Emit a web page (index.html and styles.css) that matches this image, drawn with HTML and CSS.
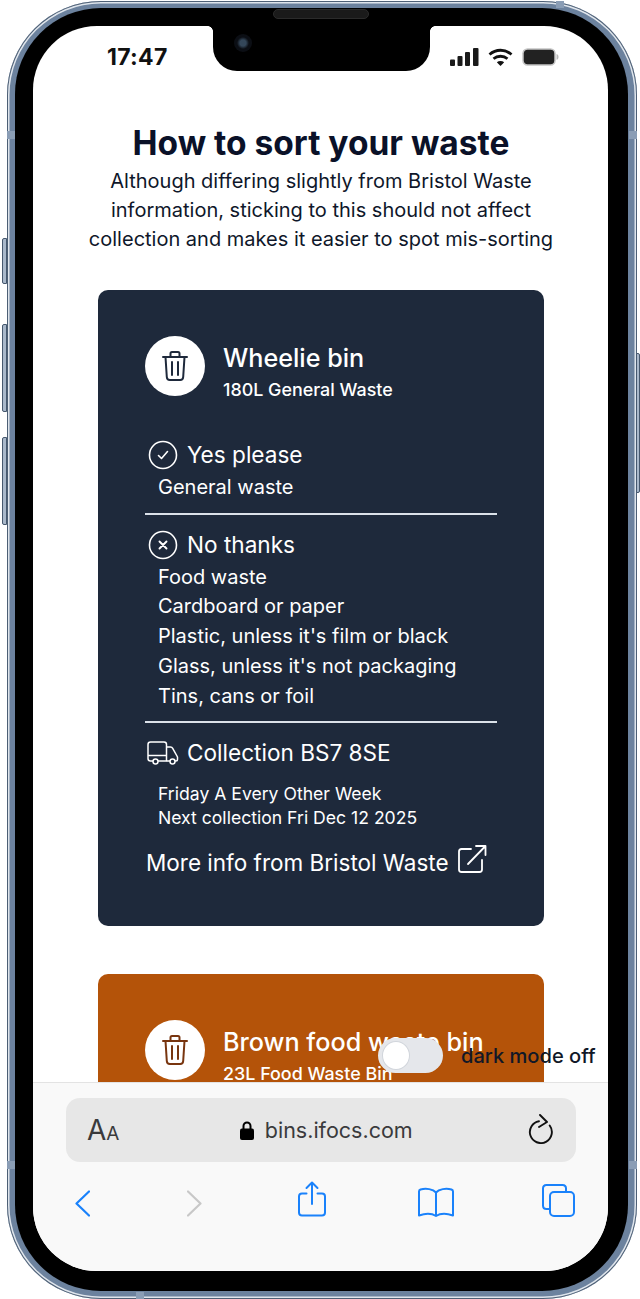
FILE: index.html

```html
<!DOCTYPE html>
<html lang="en">
<head>
  <meta charset="UTF-8">
  <title>How to sort your waste</title>
  <link rel="stylesheet" href="styles.css">
</head>
<body>
  <div class="phone">
    <span class="side-btn btn-mute"></span>
    <span class="side-btn btn-up"></span>
    <span class="side-btn btn-down"></span>
    <span class="side-btn btn-power"></span>
    <span class="band band-top"></span>
    <span class="band band-bottom"></span>
    <span class="band band-left-a"></span>
    <span class="band band-left-b"></span>
    <span class="band band-right-a"></span>
    <span class="band band-right-b"></span>
    <div class="bezel">
      <span class="speaker"></span>
      <div class="screen">
        <div class="notch">
          <span class="camera"></span>
        </div>

        <div class="status">
          <span class="time">17:47</span>
          <div class="status-icons">
            <svg width="29" height="18" viewBox="0 0 29 18" fill="#1a1a1a"><rect x="0" y="11.500" width="5" height="6.500" rx="1"/><rect x="7.500" y="8" width="5" height="10" rx="1"/><rect x="15" y="4" width="5" height="14" rx="1"/><rect x="23" y="0" width="5.500" height="18" rx="1"/></svg>
            <svg width="25" height="18" viewBox="0 0 25 18" fill="none" stroke="#111" stroke-width="2.800"><path d="M1.500 6.500C8 .8 17 .8 23.500 6.500"/><path d="M5.500 10.800c4-3.400 10-3.400 14 0"/><path d="M12.500 18l-3.700-3.700c2.100-1.700 5.300-1.700 7.400 0z" fill="#111" stroke="none"/></svg>
            <svg width="37" height="18" viewBox="0 0 37 18"><rect x="1" y="1" width="32" height="16" rx="4.500" fill="#222" stroke="#c4c4c4" stroke-width="1.500"/><path d="M34.500 6c1.500.4 2 1.600 2 2.900s-.5 2.500-2 2.900z" fill="#bbb"/></svg>
          </div>
        </div>

        <main class="page">
          <h1>How to sort your waste</h1>
          <p class="intro">Although differing slightly from Bristol Waste information, sticking to this should not affect collection and makes it easier to spot mis-sorting</p>

          <section class="card card-general">
            <div class="card-head">
              <div class="bin-icon">
                <svg width="28" height="32" viewBox="0 0 28 32" fill="none" stroke="currentColor" stroke-width="2" stroke-linejoin="round" stroke-linecap="round"><path d="M2 7h24"/><path d="M9.500 6.500V3.500q0-1.500 1.500-1.500h6q1.500 0 1.500 1.500v3"/><path d="M4.500 7l1.300 20q.2 3 3 3h10.400q2.800 0 3-3L23.500 7"/><path d="M11 12v13M17 12v13"/></svg>
              </div>
              <div class="card-title">
                <h2>Wheelie bin</h2>
                <p class="subtitle">180L General Waste</p>
              </div>
            </div>

            <div class="block block-first">
              <h3>
                <svg class="icon" width="30" height="30" viewBox="0 0 30 30" fill="none" stroke="#fff" stroke-width="1.600"><circle cx="15" cy="15" r="13.500"/><path d="M10.500 15.500l3 3 6-7" stroke-linecap="round" stroke-linejoin="round"/></svg>
                Yes please
              </h3>
              <ul>
                <li>General waste</li>
              </ul>
            </div>

            <div class="block">
              <h3>
                <svg class="icon" width="30" height="30" viewBox="0 0 30 30" fill="none" stroke="#fff" stroke-width="1.600"><circle cx="15" cy="15" r="13.500"/><path d="M11.500 11.500l7 7M18.500 11.500l-7 7" stroke-linecap="round" stroke-width="1.900"/></svg>
                No thanks
              </h3>
              <ul>
                <li>Food waste</li>
                <li>Cardboard or paper</li>
                <li>Plastic, unless it's film or black</li>
                <li>Glass, unless it's not packaging</li>
                <li>Tins, cans or foil</li>
              </ul>
            </div>

            <div class="block">
              <h3>
                <svg class="icon truck" width="32" height="24" viewBox="0 0 32 24" fill="none" stroke="#fff" stroke-width="1.500" stroke-linejoin="round"><path d="M6 20H3.500Q1 20 1 17.500V3.500Q1 1 3.500 1H17q2.500 0 2.500 2.500V20H11"/><path d="M1 14.500h18.500"/><path d="M19.500 6h4q1.500 0 2.200 1.300L30.500 16v2.500q0 1.500-1.500 1.500h-1"/><path d="M23 20h-3.500"/><circle cx="8.500" cy="20.500" r="2.500"/><circle cx="25.500" cy="20.500" r="2.500"/></svg>
                Collection BS7 8SE
              </h3>
              <ul class="dates">
                <li>Friday A Every Other Week</li>
                <li>Next collection Fri Dec 12 2025</li>
              </ul>
              <a class="more" href="#">
                More info from Bristol Waste
                <svg width="30" height="30" viewBox="0 0 30 30" fill="none" stroke="#fff" stroke-width="1.800" stroke-linecap="round" stroke-linejoin="round"><path d="M14 5H4.500Q2 5 2 7.500v18Q2 28 4.500 28h18q2.500 0 2.500-2.500V16"/><path d="M11 20L28.500 2M19 2h9.500v9"/></svg>
              </a>
            </div>
          </section>

          <section class="card card-food">
            <div class="card-head">
              <div class="bin-icon">
                <svg width="28" height="32" viewBox="0 0 28 32" fill="none" stroke="currentColor" stroke-width="2" stroke-linejoin="round" stroke-linecap="round"><path d="M2 7h24"/><path d="M9.500 6.500V3.500q0-1.500 1.500-1.500h6q1.500 0 1.500 1.500v3"/><path d="M4.500 7l1.300 20q.2 3 3 3h10.400q2.800 0 3-3L23.500 7"/><path d="M11 12v13M17 12v13"/></svg>
              </div>
              <div class="card-title">
                <h2>Brown food waste bin</h2>
                <p class="subtitle">23L Food Waste Bin</p>
              </div>
            </div>
          </section>
        </main>

        <div class="dark-toggle">
          <span class="switch"><span class="knob"></span></span>
          <span class="toggle-label">dark mode off</span>
        </div>

        <div class="toolbar">
          <div class="address">
            <span class="aa">A<small>A</small></span>
            <span class="url">
              <svg width="14" height="19" viewBox="0 0 14 19" fill="#000"><path d="M3.500 8V5a3.500 3.500 0 0 1 7 0v3" fill="none" stroke="#000" stroke-width="2"/><rect x="0" y="7.500" width="14" height="11.500" rx="2"/></svg>
              bins.ifocs.com
            </span>
            <svg class="reload" width="26" height="30" viewBox="0 0 26 30" fill="none" stroke="#111" stroke-width="1.900" stroke-linecap="round" stroke-linejoin="round"><path d="M11 7.200A11 11 0 1 0 21.700 11.500"/><path d="M12 1l7 7-8 5"/></svg>
          </div>
          <div class="nav">
            <svg class="nav-back" width="15" height="27" viewBox="0 0 15 27" fill="none" stroke="#1a82fb" stroke-width="2.200" stroke-linecap="round" stroke-linejoin="round"><path d="M14 1.500L1.500 13.500 14 25.500"/></svg>
            <svg class="nav-forward" width="15" height="27" viewBox="0 0 15 27" fill="none" stroke="#c8c8c8" stroke-width="2.200" stroke-linecap="round" stroke-linejoin="round"><path d="M1 1.500l12.500 12L1 25.500"/></svg>
            <svg class="nav-share" width="28" height="36" viewBox="0 0 28 36" fill="none" stroke="#1a82fb" stroke-width="2" stroke-linecap="round" stroke-linejoin="round"><path d="M8.500 12.500H4Q1 12.500 1 15.500v16Q1 34.500 4 34.500h20q3 0 3-3v-16q0-3-3-3h-4.500"/><path d="M14 23V1.500M8.500 7L14 1.500 19.500 7"/></svg>
            <svg class="nav-book" width="36" height="30" viewBox="0 0 36 30" fill="none" stroke="#1a82fb" stroke-width="2" stroke-linejoin="round"><path d="M18 5.500C15 2 8 1 2.500 2.500 1.500 2.800 1 3.500 1 4.500V28.500C7 26.500 14 26.500 18 29c4-2.500 11-2.500 17-.5V4.500c0-1-.5-1.700-1.500-2C28 1 21 2 18 5.500zM18 5.500V29"/></svg>
            <svg class="nav-tabs" width="33" height="33" viewBox="0 0 33 33" fill="none" stroke="#1a82fb" stroke-width="2"><path d="M8 25H4.500Q1 25 1 21.500v-17Q1 1 4.500 1h16Q24 1 24 4.500V8"/><rect x="8" y="8" width="24" height="24" rx="4"/></svg>
          </div>
        </div>
      </div>
    </div>
  </div>
</body>
</html>
```

FILE: styles.css

```css
* {
  box-sizing: border-box;
}

html, body {
  height: 100%;
}

body {
  margin: 0;
  background: #fff;
  font-family: Inter, "Liberation Sans", sans-serif;
  color: #0f172a;
}

/* device frame */
.phone {
  position: relative;
  width: 630px;
  height: 1298px;
  margin: 1px 0 0 7px;
  padding: 7px 9px 8px 8px;
  border-radius: 94px;
  background: #6c829e;
  box-shadow: inset 0 0 0 1px #4d5f75, inset 0 0 0 2.500px #dfe5ec;
}

.side-btn {
  position: absolute;
  width: 5px;
  border: 1px solid #46586e;
  background: #a9b8ca;
}

.btn-mute { left: -5px; top: 237px; height: 46px; border-radius: 2px 0 0 2px; }
.btn-up { left: -5px; top: 323px; height: 88px; border-radius: 2px 0 0 2px; }
.btn-down { left: -5px; top: 436px; height: 88px; border-radius: 2px 0 0 2px; }
.btn-power { right: -3px; top: 352px; height: 140px; width: 4px; border-radius: 0 2px 2px 0; }

.band {
  position: absolute;
  background: #8a9db5;
}

.band-top { left: 549px; top: 0; width: 8px; height: 7px; }
.band-bottom { left: 129px; bottom: 0; width: 8px; height: 7px; }
.band-left-a { left: 0; top: 130px; width: 8px; height: 8px; }
.band-left-b { left: 0; top: 1160px; width: 8px; height: 8px; }
.band-right-a { right: 0; top: 130px; width: 8px; height: 8px; }
.band-right-b { right: 0; top: 1160px; width: 8px; height: 8px; }

.bezel {
  height: 100%;
  padding: 18px 20px 20px 18px;
  border-radius: 86px;
  background: #000;
}

.speaker {
  position: absolute;
  left: 266px;
  top: 8px;
  width: 96px;
  height: 10px;
  border: 1px solid #2b2b2b;
  border-radius: 5px;
  background: #1a1a1a;
}

.screen {
  position: relative;
  display: flex;
  flex-direction: column;
  height: 100%;
  overflow: hidden;
  border-radius: 64px;
  background: #fff;
}

.notch {
  position: absolute;
  left: 180px;
  top: 0;
  width: 217px;
  height: 45px;
  border-radius: 0 0 24px 24px;
  background: #000;
}

.notch::before,
.notch::after {
  content: "";
  position: absolute;
  top: 0;
  width: 5px;
  height: 5px;
}

.notch::before {
  left: -5px;
  background: radial-gradient(circle at 0 100%, transparent 4.500px, #000 5px);
}

.notch::after {
  right: -5px;
  background: radial-gradient(circle at 100% 100%, transparent 4.500px, #000 5px);
}

.camera {
  position: absolute;
  left: 21px;
  top: 8px;
  width: 18px;
  height: 18px;
  border-radius: 50%;
  background: radial-gradient(circle, #34475a 0 3px, #0b0e14 6px);
}

.status {
  display: flex;
  flex: none;
  justify-content: space-between;
  align-items: center;
  height: 62px;
  padding: 0 49px 0 74px;
}

.time {
  font-size: 23px;
  font-weight: 700;
  letter-spacing: 0.3px;
  color: #111;
}

.status-icons {
  display: flex;
  gap: 9px;
  align-items: center;
}

/* page */
.page {
  flex: 1;
  min-height: 0;
  overflow: hidden;
  padding: 35px 64px 0 65px;
  text-align: center;
}

h1 {
  margin: 0 -20px;
  font-size: 33.500px;
  line-height: 40px;
  font-weight: 700;
  color: #0a1128;
}

.intro {
  margin: 4px -20px 0;
  font-size: 20px;
  line-height: 29px;
}

.card {
  margin-top: 36px;
  padding: 46px 47px 45px;
  border-radius: 10px;
  background: #1e293b;
  color: #fff;
  text-align: left;
}

.card-food {
  margin-top: 48px;
  background: #b45309;
}

.card-head {
  display: flex;
  gap: 18px;
  align-items: flex-start;
}

.bin-icon {
  display: flex;
  flex: none;
  justify-content: center;
  align-items: center;
  width: 60px;
  height: 60px;
  border-radius: 50%;
  background: #fff;
  color: #1e293b;
}

.card-food .bin-icon {
  color: #78350f;
}

.card-title {
  padding-top: 6px;
}

h2 {
  margin: 0;
  font-size: 25.200px;
  line-height: 32px;
  font-weight: 500;
  white-space: nowrap;
}

.subtitle {
  margin: 2px 0 0;
  font-size: 17.900px;
  line-height: 28px;
  font-weight: 500;
  white-space: nowrap;
}

.block {
  margin-top: 10px;
  padding-top: 15px;
  border-top: 2px solid #dbe1e9;
}

.block-first {
  margin-top: 21px;
  border-top: 0;
}

h3 {
  display: flex;
  gap: 9px;
  align-items: center;
  margin: 0;
  font-size: 22.600px;
  line-height: 30px;
  font-weight: 400;
}

.icon {
  flex: none;
  margin-left: 3px;
}

.truck {
  width: 32px;
  margin: 0 -1px 0 2px;
}

ul {
  margin: 0;
  padding: 3px 0 0 13px;
  list-style: none;
  font-size: 20px;
  line-height: 29.700px;
}

.dates {
  padding-top: 14px;
  font-size: 17.600px;
  line-height: 24px;
}

.more {
  display: flex;
  gap: 8px;
  align-items: center;
  margin: 14px 0 0 1px;
  font-size: 22.500px;
  line-height: 34px;
  color: #fff;
  text-decoration: none;
}

.more svg {
  margin-bottom: 7px;
}

/* dark mode switch, floats over the page */
.dark-toggle {
  position: absolute;
  left: 345px;
  top: 1012px;
  display: flex;
  gap: 18px;
  align-items: center;
}

.switch {
  display: block;
  width: 65px;
  height: 35px;
  padding: 3px 4px;
  border-radius: 18px;
  background: #e5e7eb;
}

.knob {
  display: block;
  width: 28px;
  height: 29px;
  border: 1px solid #d1d5db;
  border-radius: 50%;
  background: #fff;
}

.toggle-label {
  font-size: 20.100px;
  font-weight: 500;
  white-space: nowrap;
  color: #111827;
}

/* safari toolbar */
.toolbar {
  flex: none;
  height: 189px;
  padding: 15px 32px 0 33px;
  border-top: 1px solid #e3e3e3;
  background: #f9f9f9;
}

.address {
  display: flex;
  justify-content: space-between;
  align-items: center;
  height: 64px;
  padding: 0 22px 0 21px;
  border-radius: 14px;
  background: #e7e7e7;
}

.aa {
  font-size: 28px;
  color: #3a3a3c;
}

.aa small {
  font-size: 19px;
}

.url {
  display: flex;
  gap: 11px;
  align-items: center;
  margin-left: 5px;
  font-size: 21.500px;
  color: #3a3a3c;
}

.reload {
  margin-top: -2px;
}

.nav {
  display: flex;
  align-items: center;
  height: 76px;
  margin-top: 3px;
  padding-left: 9px;
}

.nav-forward { margin-left: 97px; }
.nav-share { margin: 0 0 9px 96px; }
.nav-book { margin: 0 0 2px 92px; }
.nav-tabs { margin: 0 0 6px 88px; }
```
